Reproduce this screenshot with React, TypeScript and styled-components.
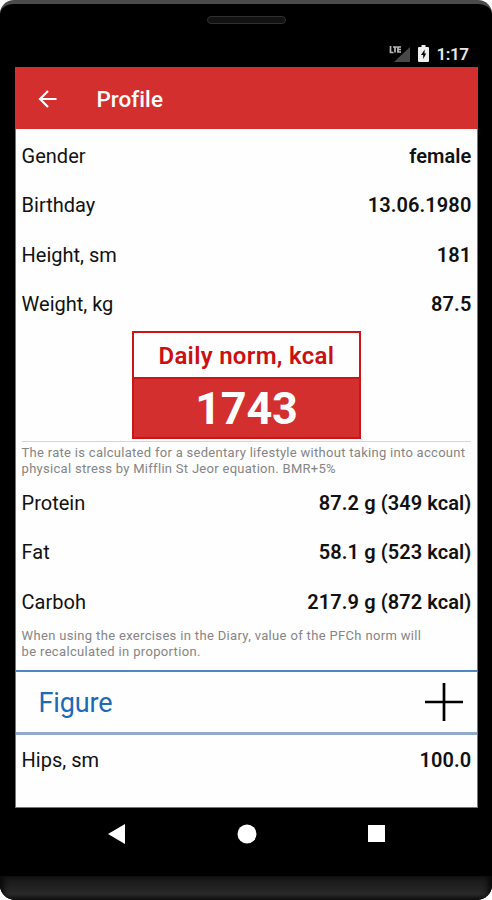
import React from "react";
import styled, { createGlobalStyle } from "styled-components";

const GlobalStyle = createGlobalStyle`
  * { box-sizing: border-box; }
  body { margin: 0; background: #fff; font-family: Roboto, sans-serif; }
`;

const Phone = styled.div`
  width: 492px;
  height: 900px;
  display: flex;
  flex-direction: column;
  background: #000;
  border-top: 4px solid #4b4b4b;
  border-radius: 14px 14px 15px 15px;
  overflow: hidden;
`;

const Earpiece = styled.div`
  width: 79px;
  height: 8px;
  margin: 12px auto 0 207px;
  border: 1.5px solid #303030;
  border-radius: 4px;
  background: #121212;
  flex: none;
`;

const StatusBar = styled.div`
  height: 43px;
  flex: none;
  display: flex;
  align-items: flex-end;
  gap: 7px;
  padding: 0 23.5px 4.5px 0;
  justify-content: flex-end;
  color: #e6e6e6;
`;

const Clock = styled.span`
  font-size: 17px;
  font-weight: 600;
  line-height: 18px;
  height: 18px;
  letter-spacing: -0.45px;
`;

const Screen = styled.main`
  width: 463px;
  height: 741px;
  flex: none;
  margin-left: 15.4px;
  background: #fefefe;
  border: solid #777;
  border-width: 0 1px 1px;
  display: flex;
  flex-direction: column;
`;

const AppBar = styled.header`
  height: 62px;
  flex: none;
  margin: 0 -1px;
  padding: 1px 0 0 22px;
  display: flex;
  align-items: center;
  background: #d32f2f;
  color: #fff;
`;

const Title = styled.h1`
  margin: 0 0 0 37px;
  font-size: 22.5px;
  font-weight: 500;
  line-height: 28px;
  letter-spacing: 0.05px;
`;

const Rows = styled.section<{ $top?: number }>`
  margin-top: ${(p) => p.$top ?? 0}px;
  padding: 0 6px 0 5.2px;
  flex: none;
`;

const Row = styled.div`
  height: 49.5px;
  display: flex;
  align-items: center;
  justify-content: space-between;
  font-size: 20px;
  line-height: 24px;
  color: #111;
`;

const Label = styled.span`
  letter-spacing: 0;
`;

const Value = styled.span`
  font-weight: 600;
  letter-spacing: 0.08px;
`;

const NormCard = styled.section`
  width: 229px;
  height: 108px;
  flex: none;
  margin: 2px 0 0 115.5px;
  border: 2px solid #cb1518;
  display: flex;
  flex-direction: column;
  text-align: center;
`;

const NormLabel = styled.div`
  height: 44px;
  flex: none;
  font-size: 24px;
  font-weight: 600;
  line-height: 47px;
  color: #cb1012;
  letter-spacing: 0.3px;
`;

const NormValue = styled.div`
  height: 60px;
  flex: none;
  background: #d32f2f;
  border-top: 2px solid #cb1518;
  color: #fff;
  font-size: 45px;
  font-weight: 700;
  line-height: 60px;
  letter-spacing: -0.2px;
`;

const Note = styled.p<{ $ruled?: boolean }>`
  margin: ${(p) => (p.$ruled ? "2px 6px 0 5.2px" : "1px 6px 0 5.2px")};
  padding-top: ${(p) => (p.$ruled ? 3 : 0)}px;
  border-top: ${(p) => (p.$ruled ? "1.5px solid #d6d6d6" : "none")};
  font-size: 13px;
  line-height: 16px;
  letter-spacing: ${(p) => (p.$ruled ? 0.29 : 0.34)}px;
  color: #858585;
  white-space: nowrap;
  flex: none;
`;

const FigureBar = styled.section`
  height: 65px;
  flex: none;
  margin-top: 10.5px;
  padding: 0 14px 0 22px;
  display: flex;
  align-items: center;
  justify-content: space-between;
  border-top: 2px solid #5288c2;
  border-bottom: 3px solid #91a9cb;
`;

const FigureTitle = styled.h2`
  margin: 2px 0 0;
  font-size: 27px;
  font-weight: 400;
  line-height: 32px;
  letter-spacing: -0.1px;
  color: #1c69b5;
`;

const NavBar = styled.nav`
  height: 68px;
  flex: none;
  padding: 16px 106px 0 107px;
  display: flex;
  justify-content: space-between;
`;

const Chin = styled.div`
  flex: 1;
  background: linear-gradient(#151515 0, #292929 75%, #111 100%);
  box-shadow: inset 6px 0 5px -2px #0a0a0a, inset -6px 0 5px -2px #0a0a0a;
`;

const Icon = styled.svg`
  display: block;
  flex: none;
`;

type Entry = { label: string; value: string };

const profile: Entry[] = [
  { label: "Gender", value: "female" },
  { label: "Birthday", value: "13.06.1980" },
  { label: "Height, sm", value: "181" },
  { label: "Weight, kg", value: "87.5" },
];

const nutrients: Entry[] = [
  { label: "Protein", value: "87.2 g (349 kcal)" },
  { label: "Fat", value: "58.1 g (523 kcal)" },
  { label: "Carboh", value: "217.9 g (872 kcal)" },
];

const EntryRow = ({ label, value }: Entry) => (
  <Row>
    <Label>{label}</Label>
    <Value>{value}</Value>
  </Row>
);

export default function App() {
  return (
    <>
      <GlobalStyle />
      <Phone>
        <Earpiece />
        <StatusBar>
          <Icon width="22" height="18" viewBox="0 0 22 18">
            <path d="M21 2v15H5z" fill="#484848" />
            <path d="M1.5 1v6.5h3M4 2h4M6 2v5.5M12 2H9v5h3M9 4.5h3" fill="none" stroke="#bbb" strokeWidth="1.7" />
          </Icon>
          <Icon width="12" height="18" viewBox="0 0 12 18">
            <path d="M3.5 0h4v2H10q1 0 1 1v13q0 1-1 1H1q-1 0-1-1V3q0-1 1-1h2.5z" fill="#eee" />
            <path d="M6.7 4.5 3 10h2.2v4L8.2 8.5H6.5z" fill="#000" />
          </Icon>
          <Clock>1:17</Clock>
        </StatusBar>
        <Screen>
          <AppBar>
            <Icon width="22" height="22" viewBox="0 0 22 22">
              <path d="M11 3 3 11l8 8M3 11h16.5" fill="none" stroke="#fff" strokeWidth="2.2" />
            </Icon>
            <Title>Profile</Title>
          </AppBar>
          <Rows $top={2}>
            {profile.map((e) => <EntryRow key={e.label} {...e} />)}
          </Rows>
          <NormCard>
            <NormLabel>Daily norm, kcal</NormLabel>
            <NormValue>1743</NormValue>
          </NormCard>
          <Note $ruled>
            The rate is calculated for a sedentary lifestyle without taking into account
            <br />
            physical stress by Mifflin St Jeor equation. BMR+5%
          </Note>
          <Rows $top={1}>
            {nutrients.map((e) => <EntryRow key={e.label} {...e} />)}
          </Rows>
          <Note>
            When using the exercises in the Diary, value of the PFCh norm will
            <br />
            be recalculated in proportion.
          </Note>
          <FigureBar>
            <FigureTitle>Figure</FigureTitle>
            <Icon width="38" height="38" viewBox="0 0 38 38">
              <path d="M19 0v38M0 19h38" fill="none" stroke="#000" strokeWidth="2.7" />
            </Icon>
          </FigureBar>
          <Rows>
            <EntryRow label="Hips, sm" value="100.0" />
          </Rows>
        </Screen>
        <NavBar>
          <Icon width="19" height="20" viewBox="0 0 19 20"><path d="M1 10 18 0v20z" fill="#fff" /></Icon>
          <Icon width="20" height="20" viewBox="0 0 20 20"><circle cx="10" cy="10" r="9.5" fill="#fff" /></Icon>
          <Icon width="19" height="20" viewBox="0 0 19 20"><path d="M1 1h17v17H1z" fill="#fff" /></Icon>
        </NavBar>
        <Chin />
      </Phone>
    </>
  );
}
